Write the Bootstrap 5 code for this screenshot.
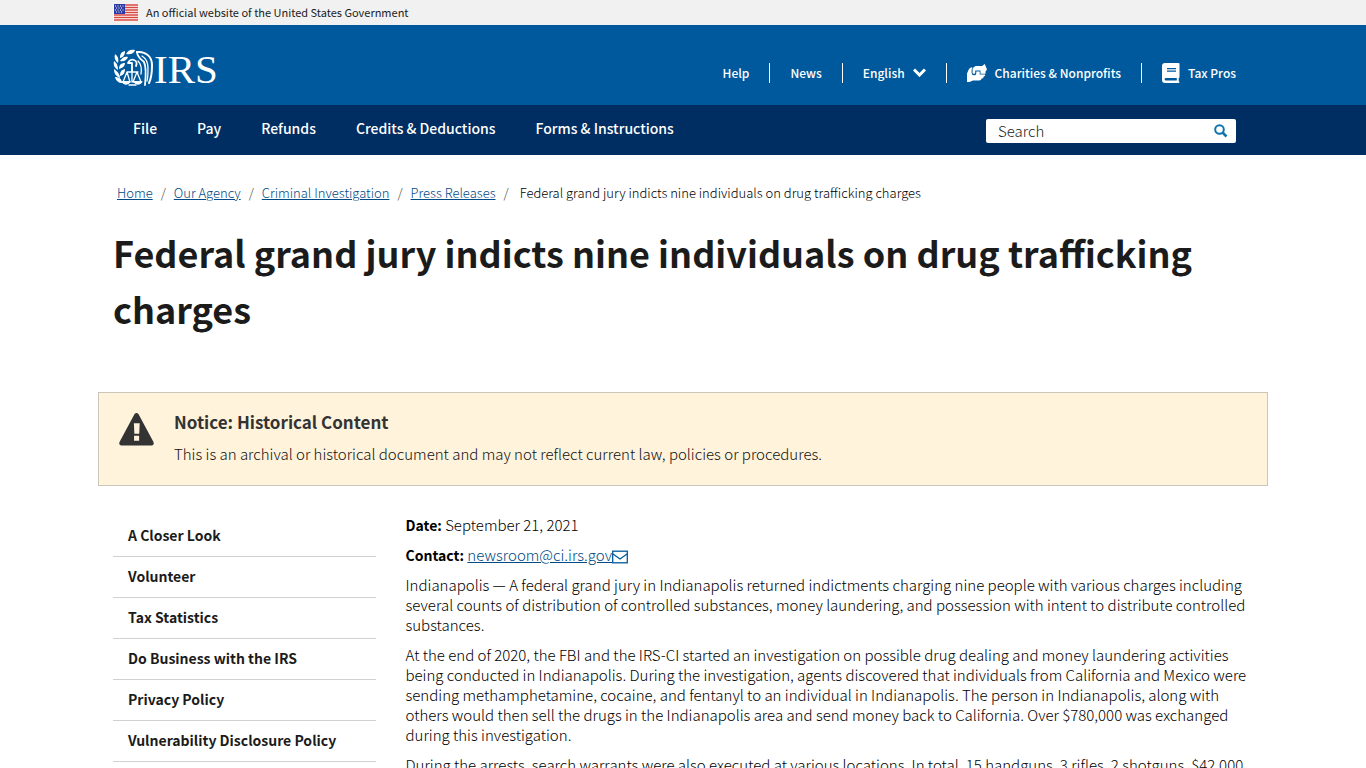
<!DOCTYPE html>
<html lang="en">
<head>
<meta charset="utf-8">
<meta name="viewport" content="width=device-width, initial-scale=1">
<title>Federal grand jury indicts nine individuals on drug trafficking charges | Internal Revenue Service</title>
<link href="https://cdn.jsdelivr.net/npm/bootstrap@5.3.0/dist/css/bootstrap.min.css" rel="stylesheet">
<style>
  body { font-family: "Noto Sans CJK JP", "Open Sans", sans-serif; font-size: 15px; font-weight: 300; line-height: 20px; color: #000; }
  a { color: #004a86; }
  strong { font-size: 14px; font-weight: 700; }
  .site-wrap { max-width: 1170px; padding-left: 15px; padding-right: 15px; }
  .header-row { padding-right: 32px; }
  .gov-bar { background: #f1f1f1; font-size: 11px; font-weight: 400; line-height: 24px; padding-bottom: 1px; color: #1b1b1b; }
  .masthead { background: #00599c; min-height: 80px; }
  .utility { font-size: 12px; font-weight: 500; line-height: 20px; margin-top: 15px; }
  .utility li { padding: 0 20px; border-right: 1px solid #fff; }
  .utility li:last-child { padding-right: 0; border-right: 0; }
  .utility a, .utility button { color: #fff; text-decoration: none; font-weight: 500; }
  .main-menu { background: #002d62; min-height: 50px; }
  .main-menu .nav-link { color: #fff; font-size: 14px; font-weight: 500; padding: 13px 20px; line-height: 20px; }
  .search-box { width: 250px; height: 24px; background: #fff; border-radius: 2px; margin-top: 6px; }
  .search-box input { font-size: 15px; font-weight: 300; line-height: 18px; color: #222; }
  .search-box input::placeholder { color: #222; opacity: 1; }
  .breadcrumb { font-size: 13px; padding: 28px 0 0 4px; --bs-breadcrumb-item-padding-x: 8px; --bs-breadcrumb-divider-color: #444; }
  .breadcrumb .active { color: #000; }
  .breadcrumb .active::before { padding-right: 11px; }
  h1 { font-size: 36px; font-weight: 700; line-height: 56px; margin: 21px 0 56px; color: #1b1b1b; }
  .notice { background: #fff3dc; border: 1px solid #ccc5b9; margin: 0 -15px 29px; padding: 20px; color: #111; min-height: 94px; }
  .notice h2 { font-size: 17px; font-weight: 700; line-height: 20px; margin: -1px 0 12px; color: #333; }
  .side-menu a { display: block; font-size: 14px; font-weight: 700; line-height: 20px; padding: 9px 15px 11px; color: #1b1b1b; text-decoration: none; border-bottom: 1px solid #d0d0d0; }
  .side-menu { padding-top: 1px; }
  .article p { margin-bottom: 10px; }
  .page-cols { --bs-gutter-x: 30px; }
</style>
</head>
<body>
<div class="gov-bar">
  <div class="container-fluid site-wrap d-flex align-items-center">
    <svg class="me-2" width="25" height="17" viewBox="0 0 25 17" aria-hidden="true">
      <rect width="25" height="17" fill="#fff"/>
      <path d="M1 1h24M1 3.500h24M1 6h24M1 8.500h24M1 11h24M1 13.500h24M1 16h24" stroke="#d8473f" stroke-width="1.300"/>
      <rect x="1" width="11" height="10" fill="#2b3aa5"/>
      <path d="M2 2h9M3 4h7M2 6h9M3 8h7" stroke="#fff" stroke-width="1" stroke-dasharray="1 1.500"/>
    </svg>
    <span>An official website of the United States Government</span>
  </div>
</div>

<header class="masthead d-flex">
  <div class="container-fluid site-wrap header-row d-flex align-items-center justify-content-between">
    <a href="#" aria-label="IRS home" class="d-block lh-1 mt-2">
      <svg width="112" height="40" viewBox="0 0 112 40" fill="none" stroke="#fff" stroke-linecap="round" stroke-linejoin="round">
        <!-- laurel branch -->
        <g fill="#fff" stroke="none">
          <path d="M22 1c-4-1-7 0-9 4 4 1 8 0 9-4z"/>
          <path d="M12 2c-4 1-5 3-5 7 4-1 5-4 5-7z"/>
          <path d="M15 8c-4-1-6 1-8 4 4 1 7-1 8-4z"/>
          <path d="M2 5c-1 4 0 7 3 9 1-4 0-7-3-9z"/>
          <path d="M12 14c-4 0-6 2-6 6 4-1 6-3 6-6z"/>
          <path d="M1 12c-1 5 1 7 4 9 0-4-1-7-4-9z"/>
          <path d="M12 20c-4 1-5 3-5 7 4-1 5-4 5-7z"/>
          <path d="M1 20c0 5 2 7 6 9 0-4-3-7-6-9z"/>
          <path d="M2 28c1 4 4 6 7 6 0-4-3-6-7-6z"/>
        </g>
        <!-- head and wing -->
        <path d="M15 14c1-3 4-4 6-3 3 1 3 4 2 6M15 14h4v8" stroke-width="1.800"/>
        <path d="M24 3c9-1 15 5 15 13 0 7 0 12-3 18" stroke-width="2"/>
        <path d="M24 3c0 5 4 7 7 10 2 4 2 13 1 23" stroke-width="1.800"/>
        <path d="M29 7c5 3 6 7 6 12 0 6 0 10-1 13M25 12c3 3 4 7 3 13" stroke-width="1.300"/>
        <!-- scales of justice -->
        <path d="M19 18v15M14 23h11M14 23l-4 10h7zM24 23l-4 10h8zM16 36h7" stroke-width="1.300"/>
        <path d="M9 33c1 3 7 3 8 0zM21 33c1 3 7 3 8 0z" stroke-width="1" fill="#fff"/>
        <text x="41" y="34" fill="#fff" stroke="none" font-family="Liberation Serif, serif" font-size="41">IRS</text>
      </svg>
    </a>
    <ul class="utility list-unstyled d-flex mb-0">
      <li><a href="#">Help</a></li>
      <li><a href="#">News</a></li>
      <li><button type="button" class="border-0 bg-transparent p-0 d-flex align-items-center gap-2">English
        <svg width="13" height="9" viewBox="0 0 13 9" fill="none" stroke="#fff" stroke-width="3" aria-hidden="true"><path d="M1 1.500 6.500 7 12 1.500"/></svg></button></li>
      <li><a href="#" class="d-flex align-items-center gap-2">
        <svg width="20" height="18" viewBox="0 0 20 18" fill="#fff" aria-hidden="true"><path d="M0 18V9.500L1.500 6C2.500 4 3.500 3.500 5.300 3.300 4.600 5 4.600 6.500 4.600 8c0 2 .8 3.300 2.400 3.300s2.300-1 2.300-2.600V7.400h3.400v3.200h5.500c0 1.200-.6 1.800-1.500 2 0 1.200-.8 2-2 2-.3 1.200-1 1.800-2.500 1.800H6L2.500 18z"/><path d="M5.600 8.700V4.500C7 2.500 8.500 2 10 2h5L17.800 0 20 5.500l-1.500 2v2.300h-5V6.500H8.200v2.200c0 1.500-2.600 1.500-2.600 0z"/></svg>
        Charities &amp; Nonprofits</a></li>
      <li><a href="#" class="d-flex align-items-center gap-2">
        <svg width="18" height="20" viewBox="0 0 18 20" aria-hidden="true"><path fill="#fff" fill-rule="evenodd" d="M3 0h13.500q1 0 1 1v13q0 .8-.8 1v3.200q.8.200.8.900t-.8.900H3q-3 0-3-3V3q0-3 3-3zM5 5v1.300h9V5zm0 2.500v1.300h9V7.500zM4 15q-1.400 0-1.400 1.300T4 17.600h10.800V15z"/></svg>
        Tax Pros</a></li>
    </ul>
  </div>
</header>

<nav class="main-menu" aria-label="Main">
  <div class="container-fluid site-wrap header-row d-flex align-items-start justify-content-between">
    <ul class="nav">
      <li class="nav-item"><a class="nav-link" href="#">File</a></li>
      <li class="nav-item"><a class="nav-link" href="#">Pay</a></li>
      <li class="nav-item"><a class="nav-link" href="#">Refunds</a></li>
      <li class="nav-item"><a class="nav-link" href="#">Credits &amp; Deductions</a></li>
      <li class="nav-item"><a class="nav-link" href="#">Forms &amp; Instructions</a></li>
    </ul>
    <form class="search-box d-flex align-items-center align-self-center" role="search">
      <input class="form-control border-0 bg-transparent shadow-none py-0 ps-2 ms-1" type="search" placeholder="Search" aria-label="Search">
      <button type="button" class="border-0 bg-transparent p-0 me-2 d-flex" aria-label="Submit search">
        <svg width="14" height="14" viewBox="0 0 14 14" fill="none" stroke="#0f73ad" stroke-width="2"><circle cx="5.500" cy="5.500" r="4.300"/><path d="m8.500 8.500 4 4" stroke-width="2.500"/></svg>
      </button>
    </form>
  </div>
</nav>

<main class="container-fluid site-wrap">
  <nav aria-label="Breadcrumb">
    <ol class="breadcrumb mb-0">
      <li class="breadcrumb-item"><a href="#">Home</a></li>
      <li class="breadcrumb-item"><a href="#">Our Agency</a></li>
      <li class="breadcrumb-item"><a href="#">Criminal Investigation</a></li>
      <li class="breadcrumb-item"><a href="#">Press Releases</a></li>
      <li class="breadcrumb-item active" aria-current="page">Federal grand jury indicts nine individuals on drug trafficking charges</li>
    </ol>
  </nav>
  <h1>Federal grand jury indicts nine individuals on drug trafficking charges</h1>

  <section class="notice d-flex align-items-start">
    <svg class="flex-shrink-0 me-3" width="35" height="33" viewBox="0 0 36 34" aria-hidden="true"><path fill="#333" fill-rule="evenodd" d="M16 1q2-2 4 0l15.500 29q1 3-2 3.500h-31q-3-.5-2-3.500zM15.300 10.500l.5 11h5l.5-11zM15.500 23.500v5h5.200v-5z"/></svg>
    <div class="ps-1">
      <h2>Notice: Historical Content</h2>
      <p class="mb-0">This is an archival or historical document and may not reflect current law, policies or procedures.</p>
    </div>
  </section>

  <div class="row page-cols">
    <nav class="col-3 side-menu" aria-label="Section">
      <a href="#">A Closer Look</a>
      <a href="#">Volunteer</a>
      <a href="#">Tax Statistics</a>
      <a href="#">Do Business with the IRS</a>
      <a href="#">Privacy Policy</a>
      <a href="#">Vulnerability Disclosure Policy</a>
    </nav>
    <article class="col-9 article">
      <p><strong>Date:</strong> September 21, 2021</p>
      <p><strong>Contact:</strong> <a href="#">newsroom@ci.irs.gov</a><svg width="16" height="14" viewBox="0 0 16 14" fill="none" stroke="#00599c" stroke-width="1.300" aria-hidden="true"><rect x=".7" y="1.200" width="14.600" height="11.600"/><path d="m1 4 7 5 7-5"/></svg></p>
      <p>Indianapolis — A federal grand jury in Indianapolis returned indictments charging nine people with various charges including several counts of distribution of controlled substances, money laundering, and possession with intent to distribute controlled substances.</p>
      <p>At the end of 2020, the FBI and the IRS-CI started an investigation on possible drug dealing and money laundering activities being conducted in Indianapolis. During the investigation, agents discovered that individuals from California and Mexico were sending methamphetamine, cocaine, and fentanyl to an individual in Indianapolis. The person in Indianapolis, along with others would then sell the drugs in the Indianapolis area and send money back to California. Over $780,000 was exchanged during this investigation.</p>
      <p>During the arrests, search warrants were also executed at various locations. In total, 15 handguns, 3 rifles, 2 shotguns, $42,000</p>
    </article>
  </div>
</main>
<script src="https://cdn.jsdelivr.net/npm/bootstrap@5.3.0/dist/js/bootstrap.bundle.min.js"></script>
</body>
</html>
